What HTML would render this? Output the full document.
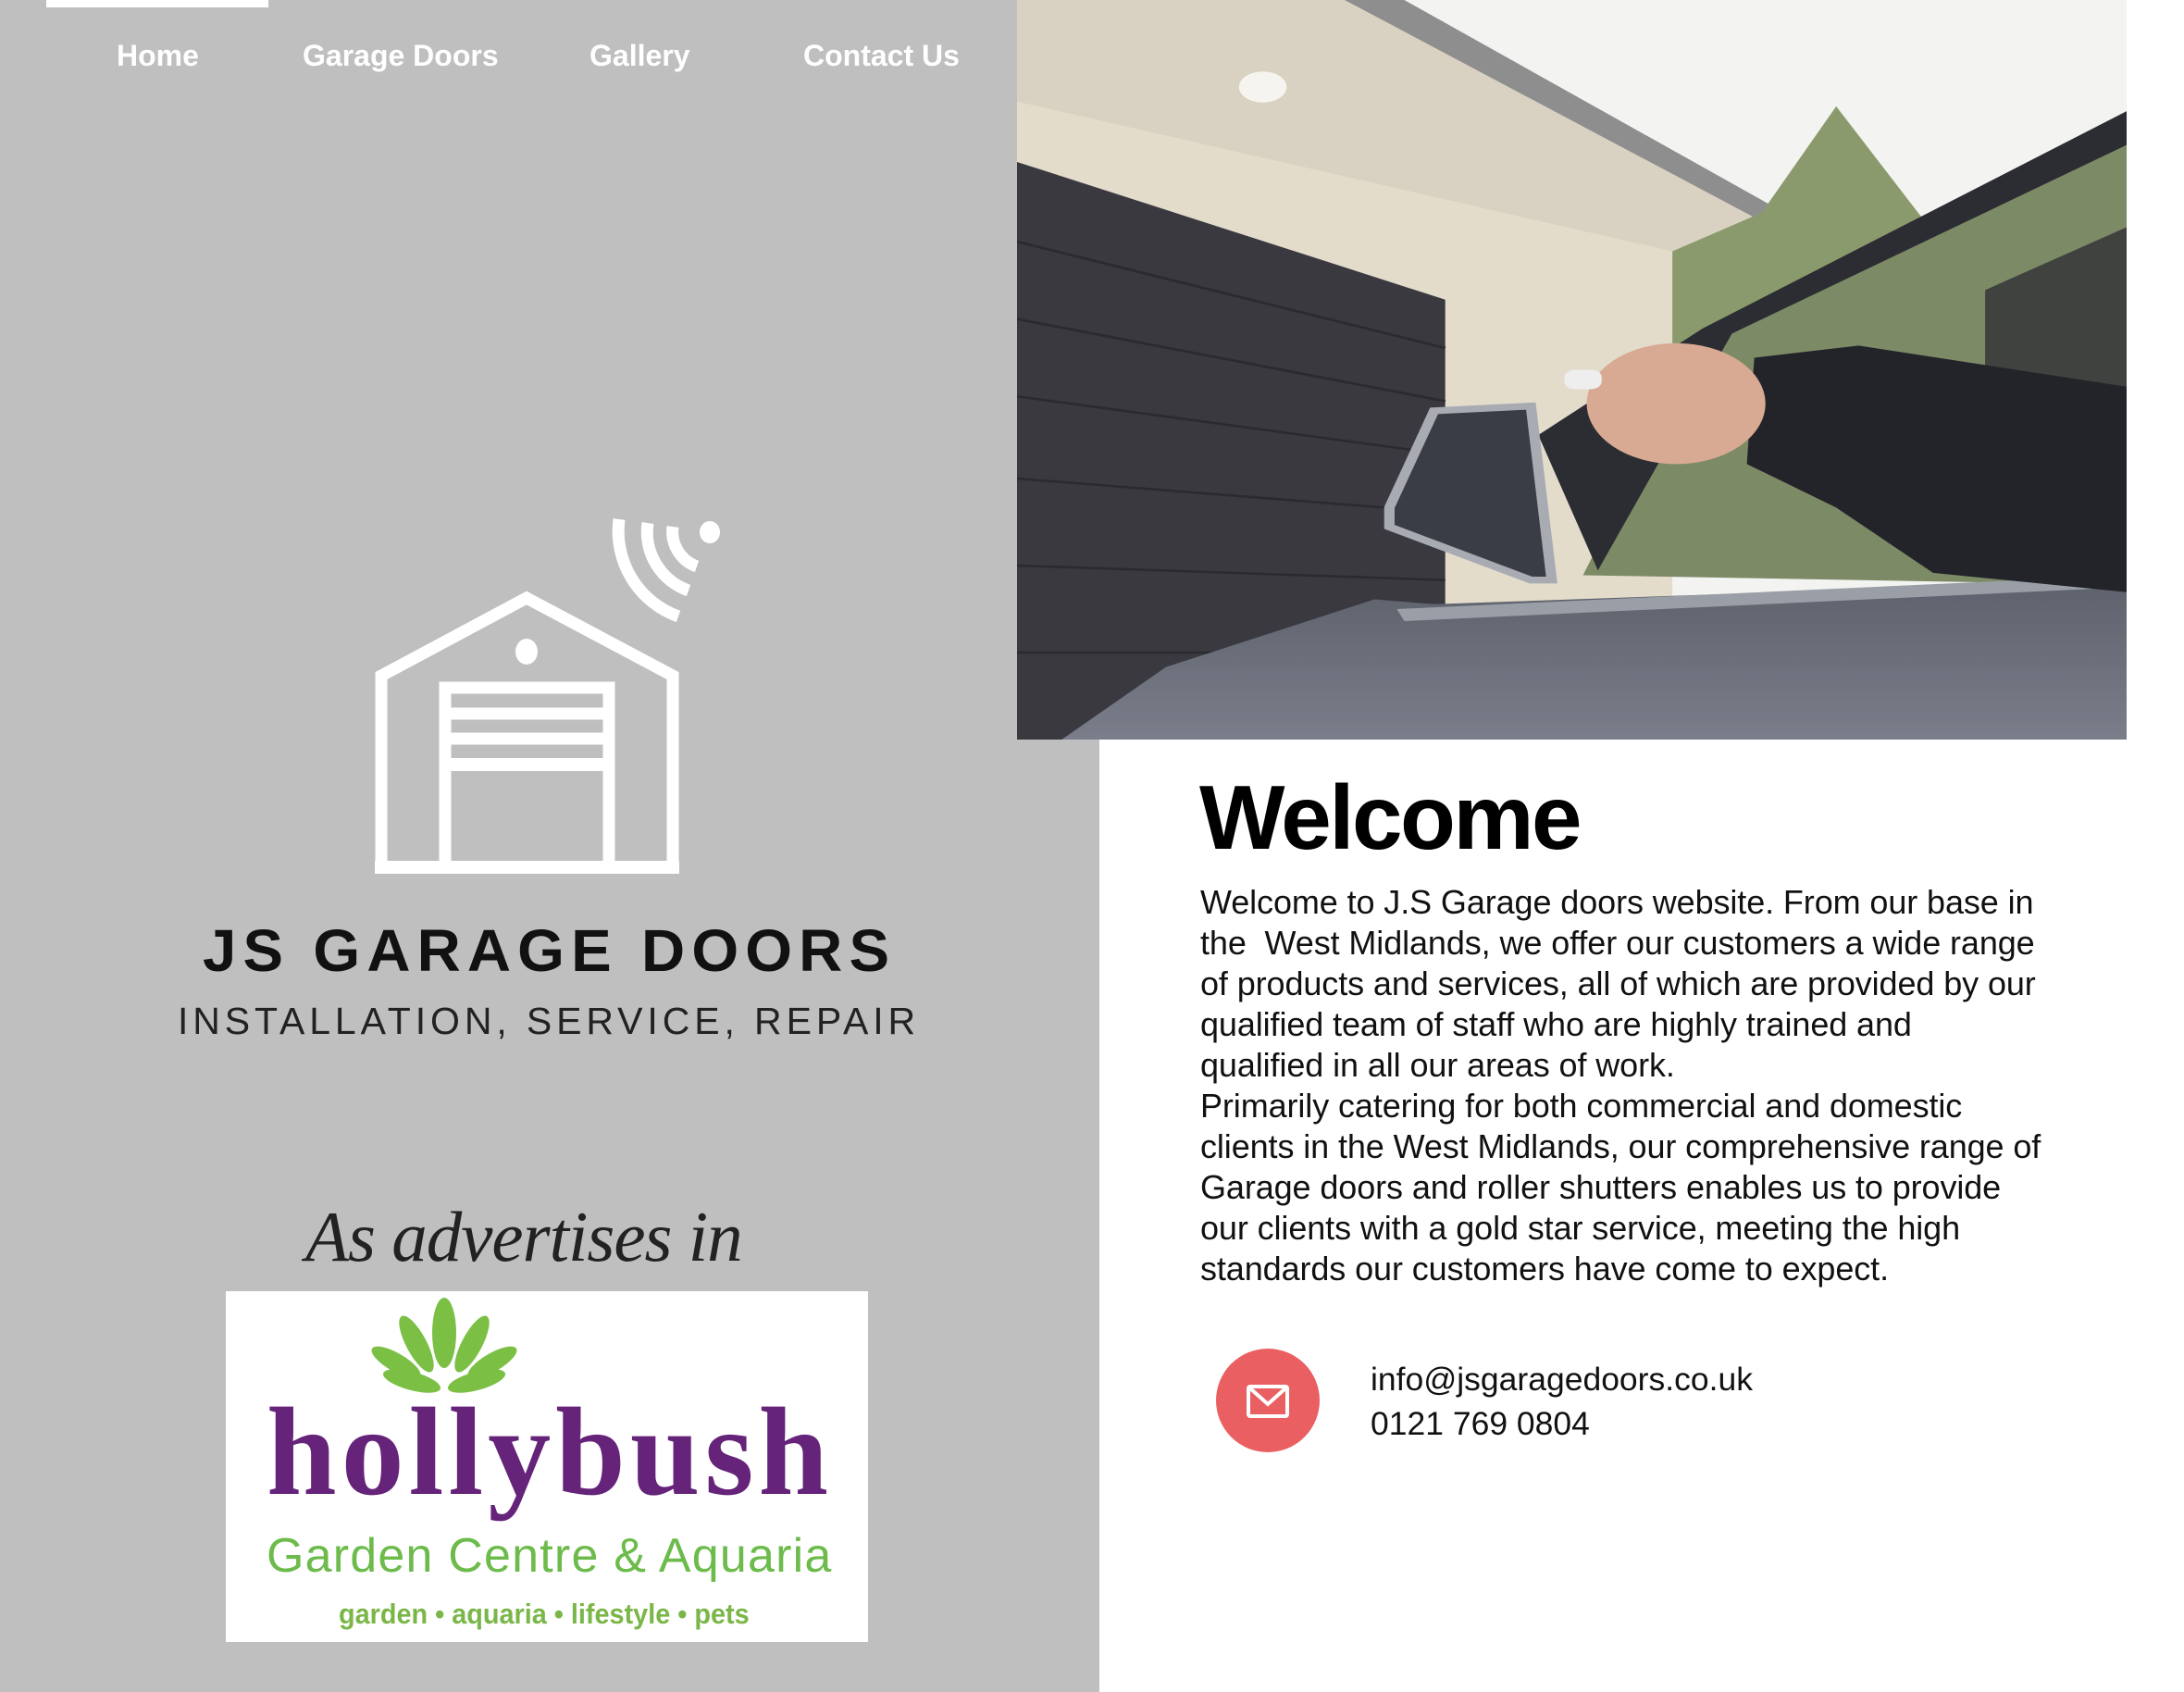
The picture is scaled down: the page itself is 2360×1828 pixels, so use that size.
<!DOCTYPE html>
<html><head><meta charset="utf-8"><style>
*{margin:0;padding:0;box-sizing:border-box}
body{width:2360px;height:1828px;position:relative;background:#fff;overflow:hidden;font-family:"Liberation Sans",sans-serif}
.a{position:absolute;white-space:nowrap}
.nav{color:#fff;font-size:32px;font-weight:bold;top:40px;line-height:40px}
</style></head><body>
<div class="a" style="left:0;top:0;width:1188px;height:1828px;background:#bfbfbf"></div>
<div class="a" style="left:50px;top:0;width:240px;height:8px;background:#fff"></div>
<div class="a nav" style="left:126px">Home</div>
<div class="a nav" style="left:327px">Garage Doors</div>
<div class="a nav" style="left:637px">Gallery</div>
<div class="a nav" style="left:868px">Contact Us</div>

<svg class="a" style="left:0;top:0" width="1188" height="1200">
<g fill="none" stroke="#fff">
<polyline points="412,944 412,730 569,646 727,730 727,944" stroke-width="13"/>
<line x1="405" y1="937" x2="734" y2="937" stroke-width="14"/>
<polyline points="481,937 481,743 658,743 658,937" stroke-width="13"/>
<line x1="481" y1="771" x2="658" y2="771" stroke-width="13"/>
<line x1="481" y1="798" x2="658" y2="798" stroke-width="13"/>
<line x1="481" y1="826" x2="658" y2="826" stroke-width="14"/>
<path d="M669,561 A98,98 0 0 0 733,666" stroke-width="13"/>
<path d="M700,565 A67,67 0 0 0 744,638" stroke-width="13"/>
<path d="M727,569 A40,40 0 0 0 753,612" stroke-width="13"/>
</g>
<ellipse cx="569" cy="704" rx="12" ry="14" fill="#fff"/>
<ellipse cx="767" cy="575" rx="11" ry="12" fill="#fff"/>
</svg>

<div class="a" style="left:219px;top:992px;font-size:64px;font-weight:bold;color:#111;letter-spacing:7px;line-height:70px;transform:scaleX(1.02);transform-origin:left">JS GARAGE DOORS</div>
<div class="a" style="left:192px;top:1080px;font-size:41px;color:#222;letter-spacing:4.9px;line-height:46px">INSTALLATION, SERVICE, REPAIR</div>
<div class="a" style="left:330px;top:1286px;font-family:'Liberation Serif',serif;font-style:italic;font-size:77px;color:#222;line-height:100px;letter-spacing:-1px">As advertises in</div>

<div class="a" style="left:244px;top:1395px;width:694px;height:379px;background:#fff"></div>
<svg class="a" style="left:390px;top:1400px" width="180" height="110" viewBox="0 0 180 110">
<g fill="#7cbf45">
<ellipse cx="90" cy="40" rx="13" ry="38"/>
<ellipse cx="60" cy="52" rx="11" ry="34" transform="rotate(-28 60 52)"/>
<ellipse cx="120" cy="52" rx="11" ry="34" transform="rotate(28 120 52)"/>
<ellipse cx="38" cy="72" rx="10" ry="30" transform="rotate(-60 38 72)"/>
<ellipse cx="142" cy="72" rx="10" ry="30" transform="rotate(60 142 72)"/>
<ellipse cx="55" cy="92" rx="10" ry="32" transform="rotate(-75 55 92)"/>
<ellipse cx="125" cy="92" rx="10" ry="32" transform="rotate(75 125 92)"/>
</g></svg>
<div class="a" style="left:288px;top:1494px;font-family:'Liberation Serif',serif;font-weight:bold;font-size:136px;color:#65237a;letter-spacing:5px;line-height:150px">hollybush</div>
<div class="a" style="left:288px;top:1652px;font-size:52px;color:#6cbb4b;line-height:58px;letter-spacing:1.2px">Garden Centre &amp; Aquaria</div>
<div class="a" style="left:366px;top:1726px;font-size:31px;font-weight:bold;color:#7ab648;line-height:36px;transform:scaleX(0.93);transform-origin:left">garden • aquaria • lifestyle • pets</div>

<svg class="a" style="left:1099px;top:0" width="1199" height="799" viewBox="0 0 1490 1530" preserveAspectRatio="none">
<defs><linearGradient id="car" x1="0" y1="0" x2="0" y2="1"><stop offset="0" stop-color="#5d616c"/><stop offset="1" stop-color="#7a7e8a"/></linearGradient></defs>
<rect width="1490" height="1530" fill="#f3f3f1"/>
<polygon points="0,0 520,0 1025,440 880,520 880,1250 0,1250" fill="#e3dccb"/>
<polygon points="150,0 450,0 1000,455 880,520 0,210 0,0" fill="#d9d2c2"/>
<polygon points="440,0 520,0 1028,438 1005,462" fill="#8e8e8e"/>
<circle cx="330" cy="180" r="32" fill="#f6f4ee"/>
<polygon points="0,335 575,620 575,1530 0,1530" fill="#3a3940"/>
<g stroke="#2a2a30" stroke-width="5">
<line x1="0" y1="500" x2="575" y2="720"/><line x1="0" y1="660" x2="575" y2="830"/><line x1="0" y1="820" x2="575" y2="940"/><line x1="0" y1="990" x2="575" y2="1060"/><line x1="0" y1="1170" x2="575" y2="1200"/><line x1="0" y1="1350" x2="575" y2="1350"/>
</g>
<polygon points="880,520 1000,440 1100,220 1200,420 1300,620 1300,1150 880,1150" fill="#8b9a6c"/>
<polygon points="760,1190 920,700 1490,290 1490,1210" fill="#7d8a66"/>
<polygon points="1300,600 1490,470 1490,1210 1300,1150" fill="#3f423f"/>
<polygon points="700,900 920,680 1490,230 1490,300 960,690 780,1180" fill="#2b2d33"/>
<polygon points="60,1530 200,1380 480,1240 560,1250 1490,1200 1490,1530" fill="url(#car)"/>
<polygon points="510,1260 1490,1190 1490,1215 520,1285" fill="#9a9ea6"/>
<polygon points="990,740 1130,715 1490,800 1490,1225 1230,1185 1100,1050 980,960" fill="#232429"/>
<ellipse cx="885" cy="835" rx="120" ry="125" fill="#d8aa93"/>
<rect x="735" y="765" width="50" height="40" rx="15" fill="#eeeeee"/>
<polygon points="500,1050 560,850 690,840 718,1200 690,1200 500,1090" fill="#3a3d45" stroke="#a8abb2" stroke-width="14"/>
</svg>

<div class="a" style="left:1296px;top:828px;font-size:98px;font-weight:bold;color:#000;letter-spacing:-2.5px;line-height:110px">Welcome</div>
<div class="a" style="left:1297px;top:953px;font-size:36px;color:#111;line-height:44px;letter-spacing:-0.1px">Welcome to J.S Garage doors website. From our base in<br>the&nbsp; West Midlands, we offer our customers a wide range<br>of products and services, all of which are provided by our<br>qualified team of staff who are highly trained and<br>qualified in all our areas of work.<br>Primarily catering for both commercial and domestic<br>clients in the West Midlands, our comprehensive range of<br>Garage doors and roller shutters enables us to provide<br>our clients with a gold star service, meeting the high<br>standards our customers have come to expect.</div>

<div class="a" style="left:1314px;top:1457px;width:112px;height:112px;border-radius:50%;background:#ea6062"></div>
<svg class="a" style="left:1346px;top:1495px" width="48" height="38" viewBox="0 0 48 38"><rect x="3" y="3" width="42" height="32" rx="2" fill="none" stroke="#fff" stroke-width="4"/><polyline points="5,5 24,22 43,5" fill="none" stroke="#fff" stroke-width="4"/></svg>
<div class="a" style="left:1481px;top:1466px;font-size:35.5px;color:#111;line-height:48px">info@jsgaragedoors.co.uk<br>0121 769 0804</div>
</body></html>
